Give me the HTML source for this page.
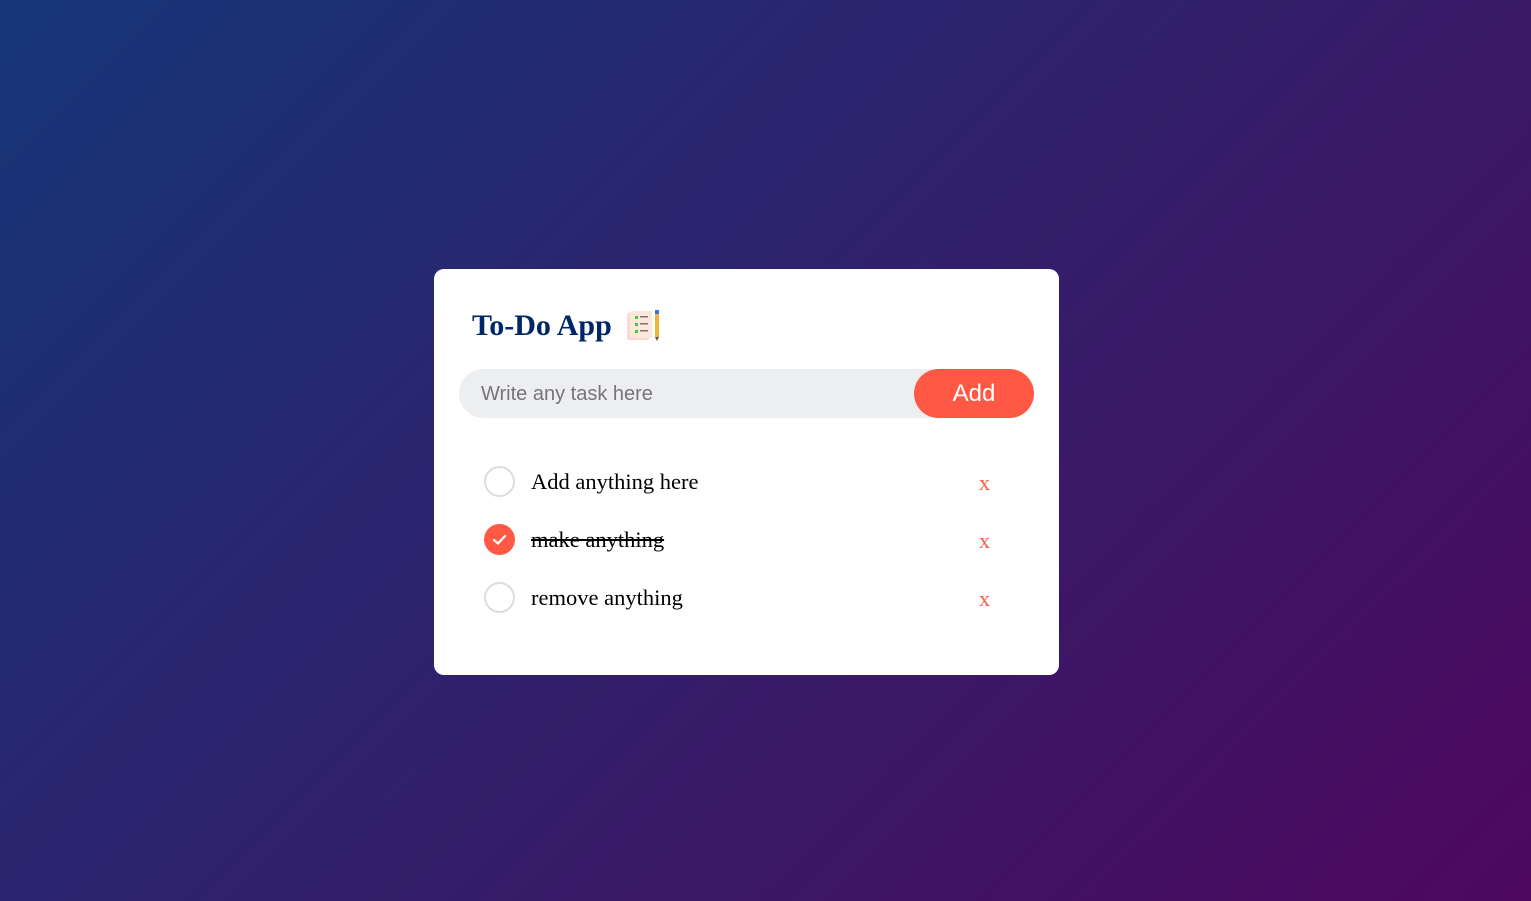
<!DOCTYPE html>
<html><head><meta charset="utf-8"><style>
*{margin:0;padding:0;box-sizing:border-box}
html,body{width:1531px;height:901px;overflow:hidden}
body{background:linear-gradient(135deg,#153677,#4e085f);font-family:"Liberation Serif",serif;position:relative}
.card{position:absolute;left:434px;top:269px;width:625px;height:406px;background:#fff;border-radius:10px}
h2{position:absolute;left:38px;top:40px;font-size:30px;color:#002765;font-weight:bold;display:flex;align-items:center}
h2 svg{margin-left:14px}
.row{position:absolute;left:25px;top:100px;width:575px;height:49px;background:#edeef0;border-radius:30px}
.row span{position:absolute;left:22px;top:14px;font-family:"Liberation Sans",sans-serif;font-size:20px;color:#75757a}
.btn{position:absolute;right:0;top:0;width:120px;height:49px;background:#ff5945;border-radius:40px;color:#fff;font-family:"Liberation Sans",sans-serif;font-size:24px;text-align:center;line-height:49px}
.item{position:absolute;left:50px;height:32px;width:520px}
.c{position:absolute;left:0;top:0;width:31px;height:31px;border-radius:50%;border:2px solid #ddd}
.c.on{background:#ff5945;border:none}
.t{position:absolute;left:47px;top:3px;font-size:22.5px;color:#000;line-height:26px}
.x{position:absolute;left:495px;top:4px;font-size:22px;color:#ff5945;line-height:26px}
</style></head><body>
<div class="card">
<h2>To-Do App <svg width="36" height="32" viewBox="0 0 36 32"><rect x="1" y="3" width="22" height="27" rx="2" fill="#fbd9cc"/><rect x="4" y="1" width="22" height="27" rx="2" fill="#fde7dd"/><rect x="9" y="6" width="3" height="3" fill="#3ad13a"/><rect x="9" y="13" width="3" height="3" fill="#3ad13a"/><rect x="9" y="20" width="3" height="3" fill="#3ad13a"/><rect x="14" y="6" width="8" height="1.5" fill="#777"/><rect x="14" y="13" width="8" height="1.5" fill="#777"/><rect x="14" y="20" width="8" height="1.5" fill="#777"/><rect x="29" y="0" width="4" height="4" fill="#2f7ad6"/><rect x="29" y="4" width="4" height="23" fill="#f2b533"/><polygon points="29,27 33,27 31,31" fill="#555"/></svg></h2>
<div class="row"><span>Write any task here</span><div class="btn">Add</div></div>
<div class="item" style="top:197px"><div class="c"></div><div class="t">Add anything here</div><div class="x">x</div></div>
<div class="item" style="top:255px"><div class="c on"><svg width="31" height="31" viewBox="0 0 31 31"><path d="M10 16 l4 3.5 l7-7.5" stroke="#fff" stroke-width="2.2" fill="none" stroke-linecap="round" stroke-linejoin="round"/></svg></div><div class="t" style="text-decoration:line-through">make anything</div><div class="x">x</div></div>
<div class="item" style="top:313px"><div class="c"></div><div class="t">remove anything</div><div class="x">x</div></div>
</div>
</body></html>
